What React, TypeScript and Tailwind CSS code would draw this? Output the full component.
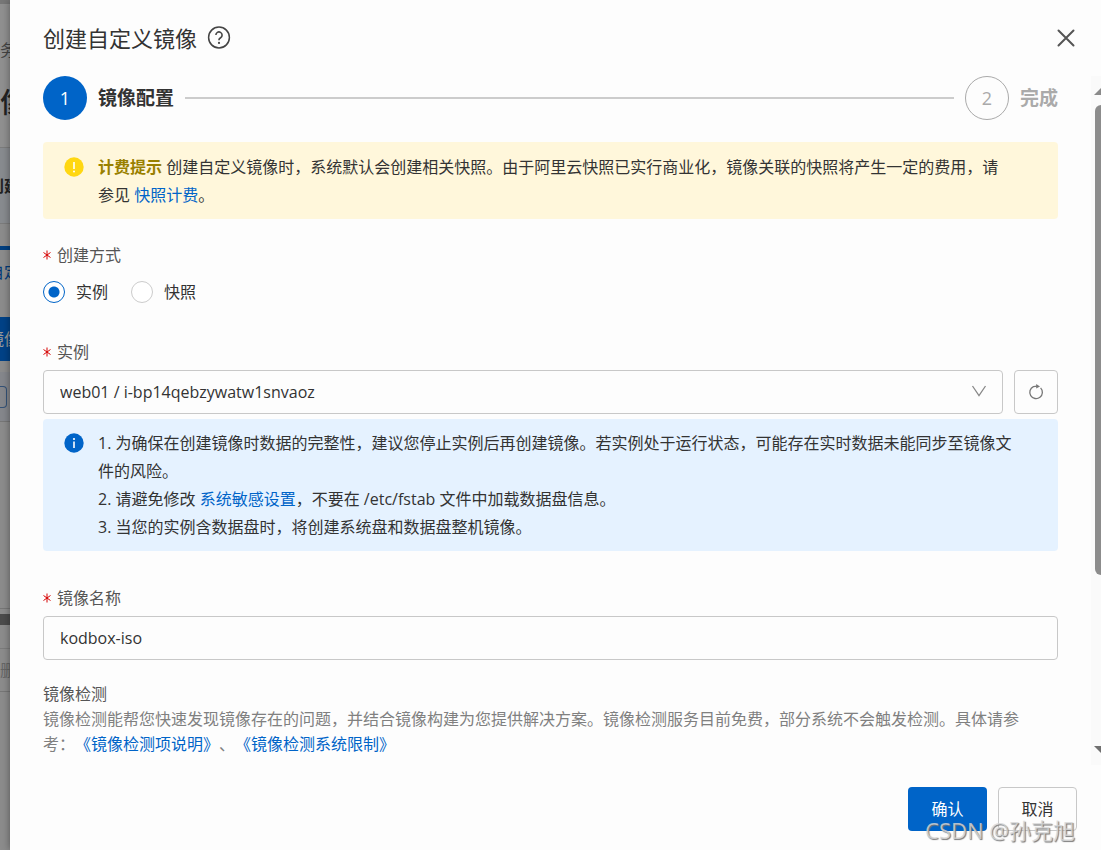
import React, { useState } from 'react';
import { clsx } from 'clsx';

interface FieldLabelProps {
  htmlFor?: string;
  children: React.ReactNode;
}

const RequiredMark = () => (
  <svg viewBox="0 0 8 10" className="w-2 h-2.5 mr-1.5 shrink-0" stroke="#d60000" strokeWidth="1" fill="none" aria-hidden="true">
    <path d="M4 0.5v9M0.5 2.5l7 5M7.5 2.5l-7 5" />
  </svg>
);

const FieldLabel = ({ htmlFor, children }: FieldLabelProps) => (
  <label htmlFor={htmlFor} className="flex items-center h-7 text-[#555]">
    <RequiredMark />
    {children}
  </label>
);

const Link = ({ children }: { children: React.ReactNode }) => (
  <a href="#" className="text-[#0064c8]">{children}</a>
);

// Console page that shows at the left of the drawer, under the mask
const PageBehind = () => (
  <aside className="w-2.5 shrink-0 overflow-hidden bg-[#8c8c8c] flex flex-col whitespace-nowrap" aria-hidden="true">
    <div className="h-[148px] border-b border-[#7c7c7c] bg-[#909090] flex flex-col items-start">
      <div className="h-1 w-full bg-[#777]" />
      <span className="mt-8 text-base leading-7 text-[#444]">务</span>
      <span className="mt-5 text-[28px] leading-9 font-medium text-[#222]">像</span>
    </div>
    <div className="h-[76px] border-b border-[#7c7c7c] bg-[#888b8f] flex items-center">
      <span className="-ml-3 text-base font-bold text-[#222]">创建</span>
    </div>
    <div className="h-[22px]" />
    <div className="h-1 bg-[#003f80]" />
    <div className="h-[67px] pt-2 text-base leading-7 text-[#003a7a]">
      <span className="-ml-3">自定</span>
    </div>
    <div className="h-11 bg-[#004287] flex items-center text-base text-[#9a9a9a]">
      <span className="-ml-3">镜像</span>
    </div>
    <div className="h-[11px]" />
    <div className="h-[50px] pt-3.5 border-b border-[#777] bg-[#85878c]">
      <div className="w-[7px] h-[22px] border border-l-0 border-[#345277] rounded-r-sm" />
    </div>
    <div className="h-[187px] border-b border-[#777]" />
    <div className="h-[5px]" />
    <div className="h-[11px] bg-[#4c4c4c]" />
    <div className="h-6 border-b border-[#7c7c7c]" />
    <div className="h-[43px] border-b border-[#777] flex items-center text-base text-[#666]">删除</div>
  </aside>
);

const Steps = () => (
  <ol className="flex items-center text-[19px] font-bold">
    <li className="flex items-center text-[#333]">
      <span className="w-11 h-11 rounded-full bg-[#0064c8] text-white font-normal text-lg flex items-center justify-center">1</span>
      <span className="ml-[11px]">镜像配置</span>
    </li>
    <li className="flex-1 h-0.5 mx-[11px] bg-[#ccc]" role="presentation" />
    <li className="flex items-center text-[#aaa]">
      <span className="w-11 h-11 rounded-full border border-[#aaa] font-normal text-lg flex items-center justify-center">2</span>
      <span className="ml-[11px]">完成</span>
    </li>
  </ol>
);

const Scrollbar = () => (
  <div className="w-2.5 overflow-hidden shrink-0 bg-[#fafafa] flex flex-col items-end pt-2.5 pb-2.5" aria-hidden="true">
    <svg viewBox="0 0 7 9" className="w-[7px] h-[9px]"><path d="M0 9L7 2V9Z" fill="#8a8a8a" /></svg>
    <div className="mt-2.5 w-1.5 h-[470px] rounded-l-md bg-[#8c8c8c]" />
    <svg viewBox="0 0 7 9" className="mt-auto w-[7px] h-[9px]"><path d="M0 0L7 7V0Z" fill="#707070" /></svg>
  </div>
);

export default function App() {
  const [source, setSource] = useState('instance');
  const [name, setName] = useState('kodbox-iso');

  const sources = [
    { value: 'instance', label: '实例' },
    { value: 'snapshot', label: '快照' },
  ];

  return (
    <div className="h-screen flex overflow-hidden bg-[#8c8c8c] text-base text-[#333] font-['Open_Sans','Noto_Sans_CJK_SC',sans-serif] [text-spacing-trim:space-all]">
      <PageBehind />
      <main className="relative flex-1 min-w-0 flex flex-col bg-[#fdfdfd] shadow-[0_0_8px_rgba(0,0,0,0.4)]">
        <header className="h-[76px] shrink-0 pl-[33px] pr-6 flex items-center">
          <h1 className="text-[22px] leading-8">创建自定义镜像</h1>
          <button type="button" aria-label="帮助" className="ml-2.5">
            <svg viewBox="0 0 24 24" className="w-6 h-6" fill="none" stroke="#444" strokeWidth="1.5">
              <circle cx="12" cy="11.5" r="10.4" />
              <path d="M8.9 9.1a3.1 3.1 0 1 1 4.7 2.6c-1 .6-1.6 1.1-1.6 2.1v.5" strokeWidth="1.6" />
              <circle cx="12" cy="16.9" r="1.1" fill="#444" stroke="none" />
            </svg>
          </button>
          <button type="button" aria-label="关闭" className="ml-auto">
            <svg viewBox="0 0 22 22" className="w-[22px] h-[22px]" stroke="#555" strokeWidth="2" strokeLinecap="round">
              <path d="M3.5 3.5l15 15M18.5 3.5l-15 15" />
            </svg>
          </button>
        </header>

        <div className="flex-1 min-h-0 flex">
          <form id="image-form" className="flex-1 min-w-0 px-[33px]">
            <Steps />

            <section className="mt-[22px] pt-[11px] pb-2.5 pl-[21px] pr-12 rounded-sm bg-[#fff7db] flex leading-7">
              <svg viewBox="0 0 20 20" className="w-5 h-5 mt-1 mr-3.5 shrink-0">
                <circle cx="10" cy="10" r="9.7" fill="#ffd712" />
                <path d="M10 5v7" stroke="#fff" strokeWidth="1.6" />
                <circle cx="10" cy="14.6" r="1" fill="#fff" />
              </svg>
              <p>
                <strong className="text-[#998000]">计费提示</strong> 创建自定义镜像时，系统默认会创建相关快照。由于阿里云快照已实行商业化，镜像关联的快照将产生一定的费用，请参见 <Link>快照计费</Link>。
              </p>
            </section>

            <fieldset className="mt-[22px]">
              <legend className="flex items-center h-7 text-[#555]"><RequiredMark />创建方式</legend>
              <div className="mt-[9px] flex gap-[23px]">
                {sources.map((item) => (
                  <label key={item.value} className="flex items-center gap-[11px] leading-7">
                    <input
                      type="radio"
                      name="source"
                      value={item.value}
                      checked={source === item.value}
                      onChange={() => setSource(item.value)}
                      className={clsx(
                        'appearance-none w-[22px] h-[22px] rounded-full border',
                        source === item.value
                          ? 'border-[#0064c8] bg-[radial-gradient(circle,#0064c8_5px,#fff_6px)]'
                          : 'border-[#ccc] bg-white'
                      )}
                    />
                    {item.label}
                  </label>
                ))}
              </div>
            </fieldset>

            <div className="mt-8">
              <FieldLabel htmlFor="instance">实例</FieldLabel>
              <div className="mt-1 flex gap-[11px]">
                <div className="relative flex-1">
                  <select id="instance" className="appearance-none w-full h-11 px-4 rounded-sm border border-[#c8c8c8] bg-[#fdfdfd]">
                    <option>web01 / i-bp14qebzywatw1snvaoz</option>
                  </select>
                  <svg viewBox="0 0 16 12" className="absolute right-4 top-[15px] w-4 h-3 pointer-events-none" fill="none" stroke="#888" strokeWidth="1.3">
                    <path d="M1.5 1L8 10.5L14.5 1" />
                  </svg>
                </div>
                <button type="button" aria-label="刷新" className="w-11 h-11 rounded-sm border border-[#c8c8c8] flex items-center justify-center">
                  <svg viewBox="0 0 16 16" className="w-4 h-4" fill="none" stroke="#777" strokeWidth="1.3">
                    <path d="M12.6 3.9A6.3 6.3 0 1 1 5.4 2.6L9.5 2.2" />
                    <path d="M8.2 0l3.8 2.4-3.8 2.2z" fill="#777" stroke="none" />
                  </svg>
                </button>
              </div>
            </div>

            <section className="mt-[5px] py-2.5 pl-[21px] pr-11 rounded-sm bg-[#e5f2ff] flex leading-7">
              <svg viewBox="0 0 20 20" className="w-5 h-5 mt-1 mr-3.5 shrink-0">
                <circle cx="10" cy="10" r="9.7" fill="#0064c8" />
                <path d="M10 8.5v6.5" stroke="#fff" strokeWidth="1.6" />
                <circle cx="10" cy="6" r="1.1" fill="#fff" />
              </svg>
              <div>
                <p>1. 为确保在创建镜像时数据的完整性，建议您停止实例后再创建镜像。若实例处于运行状态，可能存在实时数据未能同步至镜像文件的风险。</p>
                <p>2. 请避免修改 <Link>系统敏感设置</Link>，不要在 /etc/fstab 文件中加载数据盘信息。</p>
                <p>3. 当您的实例含数据盘时，将创建系统盘和数据盘整机镜像。</p>
              </div>
            </section>

            <div className="mt-[33px]">
              <FieldLabel htmlFor="name">镜像名称</FieldLabel>
              <input
                id="name"
                value={name}
                onChange={(e) => setName(e.target.value)}
                className="mt-1 block w-full h-11 px-4 rounded-sm border border-[#c8c8c8]"
              />
            </div>

            <section className="mt-[22px] pr-3 leading-[25px] text-[#808080]">
              <h2 className="text-[#555]">镜像检测</h2>
              <p>
                镜像检测能帮您快速发现镜像存在的问题，并结合镜像构建为您提供解决方案。镜像检测服务目前免费，部分系统不会触发检测。具体请参考：<Link>《镜像检测项说明》</Link>、<Link>《镜像检测系统限制》</Link>
              </p>
            </section>
          </form>
          <Scrollbar />
        </div>

        <footer className="relative h-[85px] shrink-0 pt-[22px] pr-6 flex justify-end items-start gap-[11px]">
          <button type="submit" form="image-form" className="w-[79px] h-11 rounded-sm bg-[#0064c8] text-white">确认</button>
          <button type="button" className="w-[79px] h-11 rounded-sm border border-[#c8c8c8]">取消</button>
          <span className="absolute right-[26px] bottom-1 text-[22px] leading-8 text-[#d8d8d8]/80 [text-shadow:1px_1px_1px_#777] pointer-events-none">CSDN @孙克旭</span>
        </footer>
      </main>
    </div>
  );
}
